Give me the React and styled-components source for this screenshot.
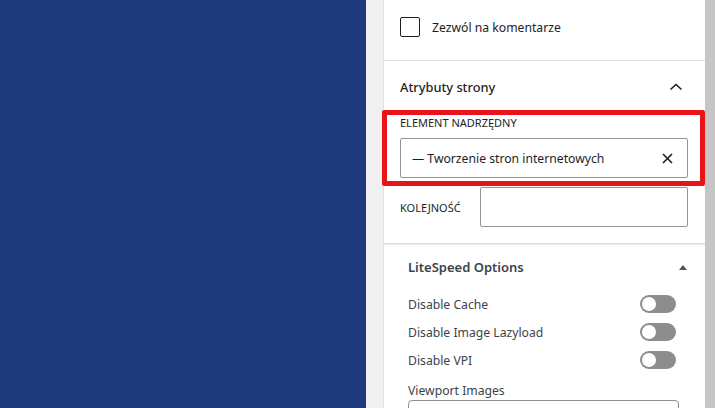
import React from "react";
import styled, { createGlobalStyle } from "styled-components";

const Global = createGlobalStyle`
  html, body { margin: 0; padding: 0; }
  body { font-family: "Noto Sans", "Open Sans", sans-serif; overflow: hidden; }
  * { box-sizing: border-box; }
`;

const Page = styled.div`
  display: flex;
  width: 715px;
  height: 408px;
  overflow: hidden;
`;

const Canvas = styled.div`
  width: 366px;
  flex: none;
  background: #1e3a7c;
`;

const Gutter = styled.div`
  width: 17px;
  flex: none;
  background: #f0f0f0;
`;

const Sidebar = styled.div`
  position: relative;
  width: 322px;
  flex: none;
  background: #fff;
  border-left: 1px solid #e0e0e0;
  color: #1e1e1e;
`;

const Scrollbar = styled.div`
  flex: 1;
  background: #c6c6c6;
`;

const Section = styled.div`
  padding: ${(p) => p.$pad || "16px"};
  border-bottom: 1px solid #e0e0e0;
`;

const CheckRow = styled.label`
  display: flex;
  align-items: center;
  gap: 12px;
  font-size: 12.2px;
`;

const CheckBox = styled.span`
  width: 20px;
  height: 20px;
  border: 1px solid #1e1e1e;
  border-radius: 2px;
  flex: none;
`;

const PanelHeader = styled.div`
  display: flex;
  align-items: center;
  justify-content: space-between;
  height: 50px;
  padding: 2px 22px 0 16px;
  font-size: 12.8px;
  font-weight: 500;
`;

const PanelBody = styled.div`
  padding: 0 17px 16px 16px;
  display: flex;
  flex-direction: column;
`;

const Label = styled.div`
  font-size: 11px;
  text-transform: uppercase;
  line-height: 16px;
  margin: 4px 0 7px;
`;

const Field = styled.div`
  height: 40px;
  border: 1px solid #949494;
  border-radius: 2px;
  display: flex;
  align-items: center;
  justify-content: space-between;
  padding: 0 14px 0 11px;
  font-size: 12.2px;
  ${(p) => p.$width && `width: ${p.$width};`}
`;

const OrderRow = styled.div`
  display: flex;
  align-items: center;
  justify-content: space-between;
  margin-top: 9px;
  font-size: 11px;
  text-transform: uppercase;
`;

const Highlight = styled.div`
  position: absolute;
  left: -2px;
  top: 110px;
  width: 323px;
  height: 76px;
  border: 5px solid #e8141c;
  border-radius: 2px;
  pointer-events: none;
`;

const MetaBox = styled.div`
  border-top: 1px solid #ececec;
  padding: 0 18px 0 24px;
`;

const MetaHeader = styled.div`
  display: flex;
  align-items: center;
  justify-content: space-between;
  height: 44px;
  font-size: 13px;
  font-weight: 600;
  color: #3c434a;
`;

const Triangle = styled.span`
  width: 0;
  height: 0;
  border-left: 4px solid transparent;
  border-right: 4px solid transparent;
  border-bottom: 5px solid #50575e;
`;

const OptionList = styled.div`
  display: flex;
  flex-direction: column;
  padding-top: 1px;
`;

const OptionRow = styled.div`
  display: flex;
  align-items: center;
  justify-content: space-between;
  height: 28px;
  font-size: 12.2px;
  color: #3c434a;
  padding-right: 11px;
`;

const Toggle = styled.span`
  position: relative;
  width: 36px;
  height: 18px;
  border-radius: 9px;
  background: #8d8d8d;
  &::after {
    content: "";
    position: absolute;
    left: 2px;
    top: 2px;
    width: 14px;
    height: 14px;
    border-radius: 50%;
    background: #fff;
  }
`;

const SubLabel = styled.div`
  font-size: 12.2px;
  color: #3c434a;
  margin-top: 8px;
  line-height: 18px;
`;

const TextArea = styled.div`
  height: 30px;
  border: 1px solid #8c8f94;
  border-radius: 4px;
  width: 271px;
`;

const ChevronUp = () => (
  <svg width="14" height="8" viewBox="0 0 14 8" fill="none">
    <path d="M1.5 6.5 L7 1.5 L12.5 6.5" stroke="#1e1e1e" strokeWidth="1.6" />
  </svg>
);

const Close = () => (
  <svg width="11" height="11" viewBox="0 0 11 11" fill="none">
    <path d="M1 1 L10 10 M10 1 L1 10" stroke="#1e1e1e" strokeWidth="1.6" />
  </svg>
);

export default function App() {
  return (
    <>
      <Global />
      <Page>
        <Canvas />
        <Gutter />
        <Sidebar>
          <Section $pad="17px 16px 23px">
            <CheckRow>
              <CheckBox />
              Zezwól na komentarze
            </CheckRow>
          </Section>
          <Section $pad="0">
            <PanelHeader>
              Atrybuty strony
              <ChevronUp />
            </PanelHeader>
            <PanelBody>
              <Label>Element nadrzędny</Label>
              <Field>
                — Tworzenie stron internetowych
                <Close />
              </Field>
              <OrderRow>
                Kolejność
                <Field $width="208px" />
              </OrderRow>
            </PanelBody>
          </Section>
          <MetaBox>
            <MetaHeader>
              LiteSpeed Options
              <Triangle />
            </MetaHeader>
            <OptionList>
              <OptionRow>
                Disable Cache
                <Toggle />
              </OptionRow>
              <OptionRow>
                Disable Image Lazyload
                <Toggle />
              </OptionRow>
              <OptionRow>
                Disable VPI
                <Toggle />
              </OptionRow>
            </OptionList>
            <SubLabel>Viewport Images</SubLabel>
            <TextArea />
          </MetaBox>
          <Highlight />
        </Sidebar>
        <Scrollbar />
      </Page>
    </>
  );
}
